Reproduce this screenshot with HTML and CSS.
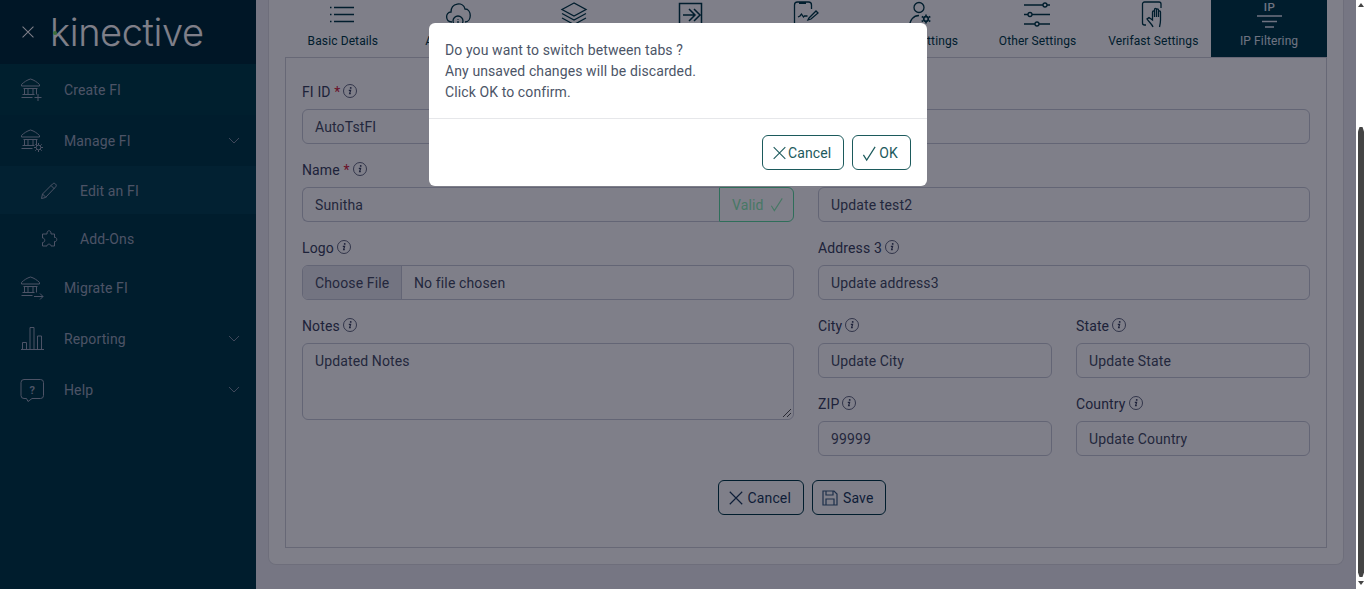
FILE: index.html
```html
<!DOCTYPE html>
<html lang="en">
<head>
<meta charset="utf-8">
<title>Kinective</title>
<link rel="stylesheet" href="styles.css">
</head>
<body>
<svg class="sprite" width="0" height="0" aria-hidden="true">
  <defs>
    <symbol id="bank" viewBox="0 0 24 24" fill="none" stroke="currentColor" stroke-width="1">
      <path d="M1.500 6.500C4 4 7 2 10.500 1c3.500 1 6.500 3 9 5.500v1.500h-18zM3.500 10.500h14M4.500 10.500v6M8 10.500v6M13 10.500v6M16.500 10.500v6M2.500 16.500h12M1.500 19.500h11"/>
    </symbol>
    <symbol id="i-x" viewBox="0 0 18 18" fill="none" stroke="currentColor" stroke-width="1.300">
      <path d="M2 2l14 14M16 2 2 16"/>
    </symbol>
    <symbol id="i-check" viewBox="0 0 16 18" fill="none" stroke="currentColor" stroke-width="1.300">
      <path d="M1.500 10.500 5 16 14 2"/>
    </symbol>
    <symbol id="i-info" viewBox="0 0 14 14">
      <circle cx="7" cy="7" r="6.500" fill="none" stroke="currentColor" stroke-width=".8"/>
      <circle cx="7.700" cy="3.900" r=".95" fill="currentColor"/>
      <path d="M5.800 6.300h1.800l-1 3.400h1.200" fill="none" stroke="currentColor" stroke-width="1.200"/>
    </symbol>
    <symbol id="chev" viewBox="0 0 12 7" fill="none" stroke="currentColor" stroke-width="1">
      <path d="M1 1l5 5 5-5"/>
    </symbol>
  </defs>
</svg>

<aside class="sidebar">
  <div class="brand">
    <svg class="brand-x"><use href="#i-x"/></svg>
    <div class="logo"><span class="logo-text">kinective</span><span class="logo-dot"></span></div>
  </div>
  <nav class="nav">
    <a class="nav-item nav-first">
      <svg class="nav-icon" viewBox="0 0 24 24" fill="none" stroke="currentColor"><use href="#bank"/><path d="M18 16v7M14.500 19.500h7"/></svg>
      <span class="nav-label">Create FI</span>
    </a>
    <a class="nav-item">
      <svg class="nav-icon" viewBox="0 0 24 24" fill="none" stroke="currentColor"><use href="#bank"/><circle cx="18.500" cy="18.500" r="2.300"/><path d="M18.500 14v2M18.500 21v2M14 18.500h2M21 18.500h2M15.300 15.300l1.500 1.500M20.200 20.200l1.500 1.500M21.700 15.300l-1.500 1.500M16.800 20.200l-1.500 1.500"/></svg>
      <span class="nav-label">Manage FI</span>
      <svg class="nav-chev"><use href="#chev"/></svg>
    </a>
    <a class="nav-sub nav-sub-active">
      <svg class="sub-icon" viewBox="0 0 18 18" fill="none" stroke="currentColor"><path d="M1.500 16.500l1-4.500L12.500 2c1-1 2-1 3 0s1 2 0 3L5.500 15.500zM2.500 12l3.500 3.500M11 3.500 14.500 7"/></svg>
      <span class="nav-label">Edit an FI</span>
    </a>
    <a class="nav-sub">
      <svg class="sub-icon" viewBox="0 0 18 18" fill="none" stroke="currentColor"><path d="M7 3c0-3 4-3 4 0v1h3.500v3.500c3-1 3 5 0 4V16H11c0-2.500-4-2.500-4 0H2.500v-3.500c3 0 3-4.500 0-4.500V4H7z"/></svg>
      <span class="nav-label">Add-Ons</span>
    </a>
    <a class="nav-item">
      <svg class="nav-icon" viewBox="0 0 24 24" fill="none" stroke="currentColor"><use href="#bank"/><path d="M14 20.500h9M20 17.500l3 3-3 3"/></svg>
      <span class="nav-label">Migrate FI</span>
    </a>
    <a class="nav-item">
      <svg class="nav-icon" viewBox="0 0 24 24" fill="none" stroke="currentColor"><path d="M1 22.500h23M2.500 22.500v-7h4v7M10 22.500V.5h4v22M17.500 22.500V9h4v13.500"/></svg>
      <span class="nav-label">Reporting</span>
      <svg class="nav-chev"><use href="#chev"/></svg>
    </a>
    <a class="nav-item">
      <svg class="nav-icon" viewBox="0 0 24 24" fill="none" stroke="currentColor"><path d="M4 1.500h16.500a3 3 0 0 1 3 3v13a3 3 0 0 1-3 3H12l-4 3-1.500-3H4a3 3 0 0 1-3-3v-13a3 3 0 0 1 3-3z"/><text class="help-q" x="12.200" y="15.500" text-anchor="middle">?</text></svg>
      <span class="nav-label">Help</span>
      <svg class="nav-chev"><use href="#chev"/></svg>
    </a>
  </nav>
</aside>

<main class="main">
  <div class="panel">
    <div class="tabs">
      <a class="tab">
        <svg class="tab-icon" viewBox="0 0 30 28" fill="none" stroke="currentColor" stroke-width="1.500"><path d="M6 7.500h20M6 14.500h20M6 21.500h20M2 7.500h1.500M2 14.500h1.500M2 21.500h1.500"/></svg>
        <span class="tab-text">Basic Details</span>
      </a>
      <a class="tab">
        <svg class="tab-icon" viewBox="0 0 30 28" fill="none" stroke="currentColor" stroke-width="1.300"><path d="M8 22c-7 0-7-10-1-10C7 3 19 1 21 9c7 0 7 13 0 13"/><circle cx="14" cy="21" r="5"/><path d="M14 19v.8M14 21v3"/></svg>
        <span class="tab-text">API Settings</span>
      </a>
      <a class="tab">
        <svg class="tab-icon" viewBox="0 0 30 28" fill="none" stroke="currentColor" stroke-width="1.300"><path d="M15 3 3 9.500 15 16 27 9.500zM3 13.500 15 20l12-6.500M3 18l12 6.500L27 18"/></svg>
        <span class="tab-text"></span>
      </a>
      <a class="tab">
        <svg class="tab-icon" viewBox="0 0 30 28" fill="none" stroke="currentColor" stroke-width="1.500"><path d="M4.500 3.500h22v22h-22zM8 15h11M14 9l6 6-6 6M19 9l6 6-6 6"/></svg>
        <span class="tab-text"></span>
      </a>
      <a class="tab">
        <svg class="tab-icon" viewBox="0 0 30 28" fill="none" stroke="currentColor" stroke-width="1.300"><path d="M3.500 26V5a3 3 0 0 1 3-3h11a3 3 0 0 1 3 3v4M7 17l2-1 1.500-2 2 3 1-1h3M18 18l7-7 2 2-7 6-3 1z"/><path d="M8 3h7" stroke-width="2"/></svg>
        <span class="tab-text"></span>
      </a>
      <a class="tab">
        <svg class="tab-icon" viewBox="0 0 30 28" fill="none" stroke="currentColor" stroke-width="1.300"><circle cx="12" cy="7.500" r="5"/><path d="M2.500 27c0-7 4-11.500 9.500-11.500"/><circle cx="19" cy="19" r="2.300" stroke-width="1.700"/><path d="M19 14.500v1.500M19 22v1.500M14.800 16.500l1.300.8M22 20.700l1.300.8M23.300 16.500l-1.300.8M16 20.700l-1.300.8" stroke-width="1.600"/></svg>
        <span class="tab-text">User Settings</span>
      </a>
      <a class="tab">
        <svg class="tab-icon" viewBox="0 0 30 28" fill="none" stroke="currentColor" stroke-width="1.300"><path d="M1 5h26M1 14.500h26M1 24h26"/><circle class="knob" cx="22" cy="5" r="2"/><circle class="knob" cx="7" cy="14.500" r="2"/><circle class="knob" cx="14" cy="24" r="2"/></svg>
        <span class="tab-text">Other Settings</span>
      </a>
      <a class="tab">
        <svg class="tab-icon" viewBox="0 0 30 28" fill="none" stroke="currentColor" stroke-width="1.300"><path d="M8 25H6.500a2 2 0 0 1-2-2V4a2 2 0 0 1 2-2H21a2 2 0 0 1 2 2v4"/><path d="M15 27c-1-3-4-5-6-8l2-1.500 3.500 2.500V12c0-1.500 2-1.500 2 0v5-7.500c0-1.500 2-1.500 2 0V17v-7c0-1.500 2-1.500 2 0v7-5c0-1.500 2-1.500 2 0v8c0 3-.5 5-1 7"/></svg>
        <span class="tab-text">Verifast Settings</span>
      </a>
      <a class="tab tab-active">
        <svg class="tab-icon" viewBox="0 0 30 28" fill="none" stroke="currentColor" stroke-width="1.300"><text class="ip-mark" x="15.500" y="11" text-anchor="middle">IP</text><path d="M3 16h25M8 21.500h15M11 27h9"/></svg>
        <span class="tab-text">IP Filtering</span>
      </a>
    </div>

    <div class="tab-body">
      <div class="columns">
        <div class="col">
          <div class="field">
            <label class="label">FI ID <span class="req">*</span><svg class="info"><use href="#i-info"/></svg></label>
            <div class="input">AutoTstFI</div>
          </div>
          <div class="field">
            <label class="label">Name <span class="req">*</span><svg class="info"><use href="#i-info"/></svg></label>
            <div class="input-group">
              <div class="input input-joined">Sunitha</div>
              <div class="valid">Valid<svg class="valid-check"><use href="#i-check"/></svg></div>
            </div>
          </div>
          <div class="field">
            <label class="label">Logo<svg class="info"><use href="#i-info"/></svg></label>
            <div class="file">
              <span class="file-btn">Choose File</span>
              <span class="file-name">No file chosen</span>
            </div>
          </div>
          <div class="field">
            <label class="label">Notes<svg class="info"><use href="#i-info"/></svg></label>
            <div class="textarea">Updated Notes
              <svg class="grip" viewBox="0 0 10 10" stroke="currentColor" fill="none"><path d="M1 9l8-8M5 9l4-4"/></svg>
            </div>
          </div>
        </div>
        <div class="col">
          <div class="field">
            <label class="label"></label>
            <div class="input"></div>
          </div>
          <div class="field">
            <label class="label"></label>
            <div class="input">Update test2</div>
          </div>
          <div class="field">
            <label class="label">Address 3<svg class="info"><use href="#i-info"/></svg></label>
            <div class="input">Update address3</div>
          </div>
          <div class="pair">
            <div class="field">
              <label class="label">City<svg class="info"><use href="#i-info"/></svg></label>
              <div class="input">Update City</div>
            </div>
            <div class="field">
              <label class="label">State<svg class="info"><use href="#i-info"/></svg></label>
              <div class="input">Update State</div>
            </div>
            <div class="field">
              <label class="label">ZIP<svg class="info"><use href="#i-info"/></svg></label>
              <div class="input">99999</div>
            </div>
            <div class="field">
              <label class="label">Country<svg class="info"><use href="#i-info"/></svg></label>
              <div class="input">Update Country</div>
            </div>
          </div>
        </div>
      </div>
      <div class="actions">
        <button class="btn"><svg class="btn-x"><use href="#i-x"/></svg>Cancel</button>
        <button class="btn">
          <svg class="btn-save" viewBox="0 0 16 16" fill="none" stroke="currentColor" stroke-width="1.200"><path d="M1 1h11l3 3v11H1zM4 1v4h7V1M4 15V9h8v6"/></svg>Save
        </button>
      </div>
    </div>
  </div>
</main>

<div class="scrollbar">
  <span class="arrow-up"></span>
  <span class="thumb"></span>
  <span class="arrow-down"></span>
</div>

<div class="backdrop"></div>
<div class="modal">
  <div class="modal-body">
    <p>Do you want to switch between tabs ?</p>
    <p>Any unsaved changes will be discarded.</p>
    <p>Click OK to confirm.</p>
  </div>
  <div class="modal-foot">
    <button class="mbtn"><svg class="mbtn-x"><use href="#i-x"/></svg>Cancel</button>
    <button class="mbtn"><svg class="mbtn-check"><use href="#i-check"/></svg>OK</button>
  </div>
</div>
</body>
</html>
```
FILE: styles.css
```css
* { box-sizing: border-box; }
html, body { height: 100%; }
body {
  margin: 0;
  display: flex;
  height: 589px;
  overflow: hidden;
  font-family: Roboto, "Liberation Sans", sans-serif;
  font-size: 14px;
  letter-spacing: .13px;
  color: #3a4a6b;
  background: #ecedf2;
}
.sprite { position: absolute; }

/* Sidebar */
.sidebar {
  width: 256px;
  flex: none;
  background: #003a46;
  color: #9aa6b8;
}
.brand {
  height: 64px;
  background: #002c38;
  display: flex;
  align-items: center;
  padding-left: 21px;
}
.brand-x { width: 14px; height: 14px; color: #fff; }
.logo { display: flex; align-items: center; margin-left: 15px; color: #fff; position: relative; }
.logo-text {
  font-family: Inter, sans-serif;
  font-size: 38px;
  line-height: 36px;
  font-weight: 300;
  letter-spacing: -.4px;
}
.logo-dot {
  position: absolute; left: 3px; top: 17px; width: 4px; height: 4px; border-radius: 50%; background: #7be060;
}
.nav-item {
  display: flex;
  align-items: center;
  height: 51px;
  padding-left: 20px;
  position: relative;
}
.nav-first { background: #003f48; }
.nav-icon { width: 24px; height: 24px; flex: none; margin-right: 20px; overflow: visible; }
.nav-label { font-size: 14px; }
.nav-chev { width: 12px; height: 7px; position: absolute; right: 16px; top: 22px; color: #7f8ea0; }
.nav-sub {
  display: flex;
  align-items: center;
  height: 48px;
  padding: 1px 0 0 40px;
}
.nav-sub-active { background: #044350; }
.sub-icon { width: 18px; height: 18px; flex: none; margin-right: 22px; }
.help-q { font: 700 11px Roboto, sans-serif; fill: currentColor; stroke: none; }

/* Main */
.main {
  flex: 1;
  min-width: 0;
  padding: 0 12px;
  background: #ecedf2;
}
.panel {
  height: 565px;
  background: #fff;
  border: 1px solid #dcdde3;
  border-top: 0;
  border-radius: 0 0 8px 8px;
  padding: 0 16px;
}
.tabs {
  display: grid;
  grid-template-columns: repeat(9, 1fr);
  height: 57px;
}
.tab {
  height: 57px;
  overflow: hidden;
  display: flex;
  flex-direction: column;
  align-items: center;
  justify-content: flex-end;
  font-size: 12px;
  letter-spacing: .11px;
  color: #003a46;
  padding-bottom: 9px;
}
.tab-text { height: 14px; line-height: 14px; white-space: nowrap; }
.tab-icon { width: 30px; height: 28px; flex: none; margin-bottom: 6px; }
.tab-active { background: #003a46; color: #dfe6ee; }
.ip-mark { font: 500 11.500px Roboto, sans-serif; fill: currentColor; stroke: none; letter-spacing: .5px; }
.knob { fill: #fff; }

.tab-body {
  height: 491px;
  border: 1px solid #ced0d8;
  padding: 22px 16px 0;
}
.columns { display: grid; grid-template-columns: 1fr 1fr; column-gap: 24px; }
.col { min-width: 0; }
.pair { display: grid; grid-template-columns: 1fr 1fr; column-gap: 24px; }
.field { margin-bottom: 14px; }
.label {
  display: flex;
  align-items: center;
  height: 22px;
  padding-top: 2px;
  margin-bottom: 7px;
  font-size: 14px;
  color: #3c4560;
  white-space: pre;
}
.req { color: #d4243b; }
.info { width: 14px; height: 14px; margin: -2px 0 0 3px; flex: none; color: #3c4560; }
.input {
  height: 35px;
  border: 1px solid #c7cad6;
  border-radius: 6px;
  padding: 0 12px;
  display: flex;
  align-items: center;
  color: #474f66;
  background: #fff;
}
.input-group { display: flex; }
.input-joined { flex: 1; border-radius: 6px 0 0 6px; border-right: 0; }
.valid {
  width: 75px;
  height: 35px;
  flex: none;
  border: 1px solid #5fdca0;
  border-radius: 0 6px 6px 0;
  display: flex;
  align-items: center;
  padding-left: 12px;
  color: #90f0b8;
}
.valid-check { width: 14px; height: 17px; margin-left: 6px; color: #90f0b8; }
.file {
  height: 35px;
  border: 1px solid #c7cad6;
  border-radius: 6px;
  display: flex;
  align-items: center;
  overflow: hidden;
  color: #474f66;
}
.file-btn {
  height: 100%;
  width: 99px;
  background: #e7e9ef;
  border-right: 1px solid #c7cad6;
  display: flex;
  align-items: center;
  padding-left: 12px;
}
.file-name { padding-left: 12px; }
.textarea {
  height: 77px;
  border: 1px solid #c7cad6;
  border-radius: 6px;
  padding: 9px 12px;
  color: #474f66;
  position: relative;
}
.grip { position: absolute; right: 1px; bottom: 1px; width: 10px; height: 10px; color: #555; }

.actions { display: flex; justify-content: center; gap: 8px; margin-top: 10px; padding-right: 8px; }
.btn {
  height: 35px;
  border: 1px solid #003a46;
  border-radius: 6px;
  background: #fff;
  color: #1c3d5c;
  font: inherit;
  letter-spacing: .13px;
  display: flex;
  align-items: center;
  padding: 0 12px 0 9px;
}
.btn-x { width: 16px; height: 16px; margin-right: 4px; }
.btn-save { width: 16px; height: 16px; margin-right: 5px; color: #3b5f80; }

/* Page scrollbar */
.scrollbar {
  width: 10px;
  flex: none;
  background: #fff;
  padding: 0 2px;
  position: relative;
  z-index: 3;
  display: flex;
  flex-direction: column;
  align-items: center;
}
.arrow-up, .arrow-down { width: 0; height: 0; border-left: 3.500px solid transparent; border-right: 3.500px solid transparent; flex: none; }
.arrow-up { border-bottom: 4px solid #444; margin-top: 3px; }
.arrow-down { border-top: 4px solid #444; margin-top: 4px; }
.thumb { width: 6px; height: 450px; background: #444; margin-top: 120px; clip-path: polygon(25% 0, 75% 0, 100% 1%, 100% 99%, 75% 100%, 25% 100%, 0 99%, 0 1%); }

/* Modal */
.backdrop {
  position: fixed;
  left: 0;
  top: 0;
  right: 10px;
  bottom: 0;
  background: rgba(0, 0, 20, .5);
  z-index: 1;
}
.modal {
  position: fixed;
  left: 429px;
  top: 23px;
  width: 498px;
  height: 163px;
  background: #fff;
  border-radius: 6px;
  z-index: 2;
  color: #4c5567;
}
.modal-body {
  height: 96px;
  border-bottom: 1px solid #e6e7ea;
  padding: 17px 16px 0;
  font-size: 14px;
  letter-spacing: .105px;
  line-height: 21px;
}
.modal-body p { margin: 0; }
.modal-foot {
  display: flex;
  justify-content: flex-end;
  gap: 8px;
  padding: 16px 16px 0;
}
.mbtn {
  height: 35px;
  border: 1px solid #1c5a5c;
  border-radius: 6px;
  background: #fff;
  color: #1c5a5c;
  font: inherit;
  font-size: 14px;
  letter-spacing: .13px;
  display: flex;
  align-items: center;
  padding: 1px 12px 0 9px;
}
.mbtn-x { width: 15px; height: 16px; margin-right: 1px; }
.mbtn-check { width: 15px; height: 17px; margin-right: 2px; }
```
